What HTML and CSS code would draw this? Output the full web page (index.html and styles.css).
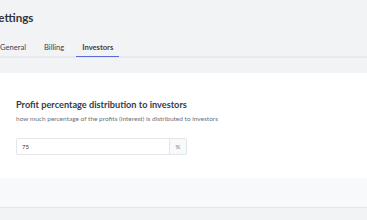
FILE: index.html
```html
<!DOCTYPE html>
<html lang="en">
<head>
  <meta charset="UTF-8">
  <meta name="viewport" content="width=device-width, initial-scale=1.0">
  <title>Settings</title>
  <link rel="stylesheet" href="styles.css">
</head>
<body>
  <div class="header">
    <h1 class="title">Settings</h1>
    <nav class="tabs">
      <a class="tab">General</a>
      <a class="tab">Billing</a>
      <a class="tab active">Investors</a>
    </nav>
  </div>

  <div class="content">
    <div class="card">
      <div class="card-body">
        <h2 class="card-title">Profit percentage distribution to investors</h2>
        <p class="card-text">how much percentage of the profits (interest) is distributed to investors</p>
        <div class="input-group">
          <input type="text" class="input" value="75">
          <span class="addon">%</span>
        </div>
      </div>
      <div class="card-footer"></div>
    </div>
  </div>
</body>
</html>
```

FILE: styles.css
```css
body {
  margin: 0;
  background: #f2f3f5;
  font-family: Lato, "Open Sans", sans-serif;
  color: #3b4250;
}
.header {
  border-bottom: 2px solid #e8e9ec;
}
.title {
  margin: 0 0 0 -8px;
  padding-top: 10px;
  font-size: 11.6px;
  font-weight: 700;
  line-height: 16px;
  color: #2f3440;
}
.tabs {
  display: flex;
  gap: 6px;
  margin: 13px 0 0 -6px;
}
.tab {
  display: block;
  padding: 0 6px;
  font-size: 7.6px;
  line-height: 17px;
  color: #3b4250;
  border-bottom: 1.5px solid transparent;
  margin-bottom: -1px;
}
.tab.active {
  font-weight: 700;
  border-bottom-color: #5a6bd8;
}
.content {
  padding-top: 15px;
}
.card {
  background: #fff;
  border-bottom: 1px solid #e3e5e8;
}
.card-body {
  padding: 25px 16px 23px;
}
.card-title {
  margin: 0;
  font-size: 9.2px;
  font-weight: 700;
  line-height: 14px;
  color: #363c48;
}
.card-text {
  margin: 2px 0 15px;
  font-size: 6.5px;
  line-height: 9px;
  color: #6b7280;
}
.input-group {
  display: flex;
  width: 171px;
  height: 17px;
  box-sizing: border-box;
  border: 1px solid #e2e5e9;
  border-radius: 2px;
}
.input {
  flex: 1;
  min-width: 0;
  border: 0;
  padding: 0 5px;
  font-family: inherit;
  font-size: 6px;
  color: #333;
  background: #fff;
}
.addon {
  width: 16px;
  border-left: 1px solid #e2e5e9;
  background: #f8f9fa;
  font-size: 6px;
  line-height: 15px;
  text-align: center;
  color: #777;
}
.card-footer {
  height: 29px;
  background: #f8f9fa;
}
```
